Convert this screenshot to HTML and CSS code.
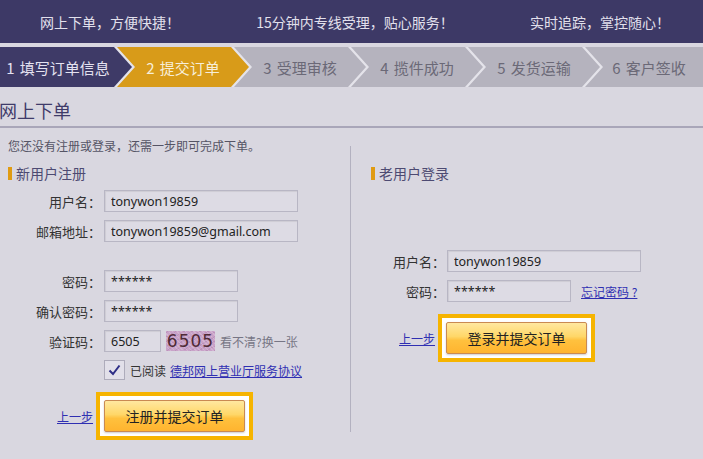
FILE: index.html
```html
<!DOCTYPE html>
<html lang="zh-CN">
<head>
<meta charset="utf-8">
<title>网上下单</title>
<link rel="stylesheet" href="styles.css">
</head>
<body>
<div class="topbar">
  <span>网上下单，方便快捷！</span>
  <span>15分钟内专线受理，贴心服务！</span>
  <span>实时追踪，掌控随心！</span>
</div>
<div class="steps">
  <div class="step done first">1 填写订单信息</div>
  <div class="step current">2 提交订单</div>
  <div class="step">3 受理审核</div>
  <div class="step">4 揽件成功</div>
  <div class="step">5 发货运输</div>
  <div class="step last">6 客户签收</div>
</div>
<div class="page-title">网上下单</div>
<div class="columns">
  <div class="col-left">
    <p class="intro">您还没有注册或登录，还需一步即可完成下单。</p>
    <h2 class="sec-title"><span class="bar"></span>新用户注册</h2>
    <div class="row first-row">
      <label class="label">用户名：</label>
      <input class="field wide" type="text" value="tonywon19859">
    </div>
    <div class="row">
      <label class="label">邮箱地址：</label>
      <input class="field wide" type="text" value="tonywon19859@gmail.com">
    </div>
    <div class="row spaced">
      <label class="label">密码：</label>
      <input class="field mid" type="text" value="******">
    </div>
    <div class="row">
      <label class="label">确认密码：</label>
      <input class="field mid" type="text" value="******">
    </div>
    <div class="row">
      <label class="label">验证码：</label>
      <input class="field small" type="text" value="6505">
      <span class="captcha">6505</span>
      <a class="refresh">看不清?换一张</a>
    </div>
    <div class="check-row">
      <span class="checkbox"><svg width="13" height="12" viewBox="0 0 13 12"><path d="M1.5 6.5 L5 10 L11.5 1.5" fill="none" stroke="#2e2e86" stroke-width="2"/></svg></span>
      <span class="read">已阅读</span>
      <a class="link agree" href="#">德邦网上营业厅服务协议</a>
    </div>
    <div class="actions left-actions">
      <a class="link back" href="#">上一步</a>
      <div class="btn-wrap"><button class="btn">注册并提交订单</button></div>
    </div>
  </div>
  <div class="col-right">
    <h2 class="sec-title right-title"><span class="bar"></span>老用户登录</h2>
    <div class="row login-first">
      <label class="label rlabel">用户名：</label>
      <input class="field wide" type="text" value="tonywon19859">
    </div>
    <div class="row">
      <label class="label rlabel">密码：</label>
      <input class="field rmid" type="text" value="******">
      <a class="link forgot" href="#">忘记密码 ?</a>
    </div>
    <div class="actions right-actions">
      <a class="link back" href="#">上一步</a>
      <div class="btn-wrap"><button class="btn">登录并提交订单</button></div>
    </div>
  </div>
</div>
</body>
</html>
```

FILE: styles.css
```css
* { box-sizing: border-box; }
html, body {
  margin: 0;
  padding: 0;
}
body {
  width: 703px;
  height: 459px;
  overflow: hidden;
  background: #d9d7e0;
  font-family: "Noto Sans CJK SC", "Noto Sans", sans-serif;
  color: #333;
}

.topbar {
  height: 43px;
  background: #3d3966;
  color: #e2e0ec;
  font-size: 14px;
  display: flex;
  align-items: center;
  justify-content: space-between;
  padding: 0 33px 0 40px;
}

.steps {
  margin-top: 4px;
  height: 40px;
  display: flex;
  background: #e4e3ea;
}
.step {
  flex: 0 0 135px;
  margin-right: -18px;
  height: 40px;
  padding: 0 21px 0 18px;
  display: flex;
  align-items: center;
  justify-content: center;
  font-size: 15px;
  white-space: nowrap;
  word-spacing: 2px;
  background: #b5b3be;
  color: #6b6977;
  clip-path: polygon(0 0, 114px 0, 132px 50%, 114px 100%, 0 100%, 18px 50%);
}
.step.first {
  padding-left: 2px;
  clip-path: polygon(0 0, 114px 0, 132px 50%, 114px 100%, 0 100%);
}
.step.done { background: #3e3a67; color: #e4e2f0; }
.step.current { background: #d89b19; color: #f7eed8; }
.step.last {
  flex: 1 1 auto;
  margin-right: 0;
  padding-right: 8px;
  clip-path: polygon(0 0, 100% 0, 100% 100%, 0 100%, 18px 50%);
}

.page-title {
  margin-top: 11px;
  margin-left: -1px;
  font-size: 18px;
  line-height: 24px;
  color: #3f3b6a;
  padding-bottom: 4px;
  border-bottom: 2px solid #a9a6b9;
}

.columns {
  display: flex;
  align-items: flex-start;
}
.col-left {
  width: 350px;
  padding-top: 10px;
}
.col-right {
  flex: 1;
  margin-top: 18px;
  height: 286px;
  border-left: 1px solid #b3b1c0;
}

.intro {
  margin: 0;
  padding-left: 8px;
  font-size: 12px;
  line-height: 16px;
  color: #555465;
}

.sec-title {
  margin: 9px 0 0;
  padding-left: 8px;
  display: flex;
  align-items: center;
  font-size: 14px;
  font-weight: normal;
  line-height: 20px;
  color: #4d4a72;
}
.sec-title .bar {
  width: 4px;
  height: 13px;
  background: #e09b12;
  margin-right: 4px;
}
.right-title {
  margin-top: 17px;
  padding-left: 20px;
}

.row {
  display: flex;
  align-items: center;
  height: 22px;
  margin-top: 8px;
}
.row.first-row { margin-top: 7px; }
.row.spaced { margin-top: 28px; }
.row.login-first { margin-top: 67px; }

.label {
  width: 101px;
  margin-right: 3px;
  text-align: right;
  font-size: 13px;
  color: #333;
  white-space: nowrap;
}
.rlabel {
  width: 94px;
  margin-right: 2px;
}

.field {
  height: 22px;
  border: 1px solid #b8b6c4;
  background: #dddbe4;
  box-shadow: inset 1px 1px 1px rgba(0,0,0,0.07);
  padding: 0 6px;
  font-family: "Noto Sans", "Noto Sans CJK SC", sans-serif;
  font-size: 12.5px;
  color: #222;
  outline: none;
}
.field.wide { width: 194px; }
.field.mid { width: 134px; }
.field.rmid { width: 124px; }
.field.small { width: 57px; }

.captcha {
  margin-left: 5px;
  width: 49px;
  height: 20px;
  display: flex;
  align-items: center;
  justify-content: center;
  background:
    repeating-linear-gradient(45deg, rgba(255,255,255,0.18) 0 1px, transparent 1px 3px),
    repeating-linear-gradient(-30deg, rgba(120,60,120,0.15) 0 1px, transparent 1px 4px),
    #c9a2c8;
  font-family: "DejaVu Sans", sans-serif;
  font-size: 17px;
  letter-spacing: 1px;
  color: #4f2a36;
}
.refresh {
  margin-left: 5px;
  font-size: 12px;
  color: #777685;
  white-space: nowrap;
}

.check-row {
  display: flex;
  align-items: center;
  margin-top: 8px;
  padding-left: 104px;
  height: 20px;
}
.checkbox {
  width: 21px;
  height: 20px;
  border: 1px solid #aeacbb;
  background: #e2e0e9;
  display: flex;
  align-items: center;
  justify-content: center;
}
.read {
  margin-left: 5px;
  font-size: 12px;
  color: #333;
}
.link {
  color: #2f2fb2;
  text-decoration: underline;
  font-size: 12px;
  white-space: nowrap;
}
.agree { margin-left: 4px; }
.forgot { margin-left: 10px; }

.actions {
  display: flex;
  align-items: center;
  margin-top: 12px;
}
.left-actions { padding-left: 57px; }
.right-actions { padding-left: 48px; }
.back { margin-right: 3px; }

.btn-wrap {
  border: 4px solid #f6b400;
  background: #fff;
  padding: 4px;
}
.btn {
  display: block;
  width: 141px;
  height: 32px;
  border: 1px solid #c98a52;
  border-radius: 2px;
  background: linear-gradient(#ffe8a0, #ffd768 45%, #ffc13e 58%, #ffb42f);
  box-shadow: 0 1px 2px rgba(0,0,0,0.2);
  font-family: "Noto Sans CJK SC", sans-serif;
  font-size: 14px;
  color: #222;
  padding: 0;
}
```
